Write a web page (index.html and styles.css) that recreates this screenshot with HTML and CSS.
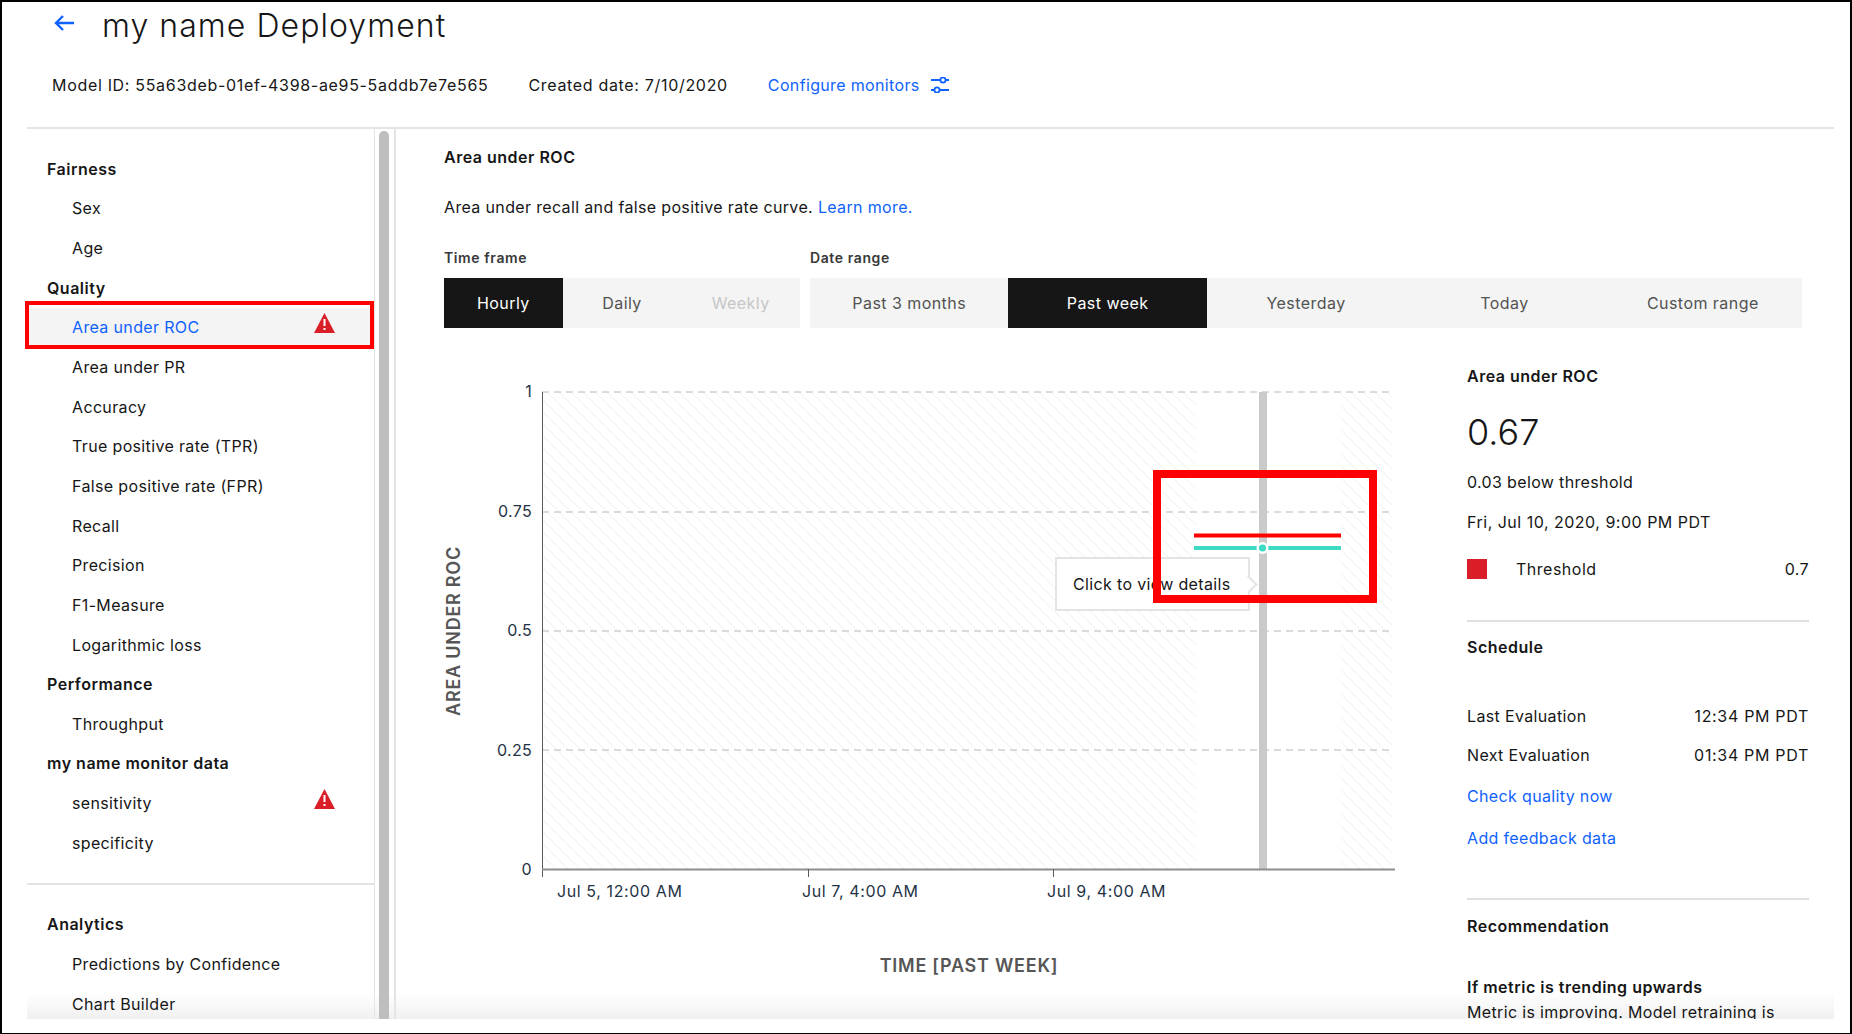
FILE: index.html
```html
<!DOCTYPE html>
<html lang="en">
<head>
    <meta charset="UTF-8">
    <title>my name Deployment</title>
    <link rel="stylesheet" href="styles.css">
</head>
<body>
<div class="frame">
    <header class="top">
        <div class="title-row">
            <svg class="back" viewBox="0 0 20 16" width="20" height="16"><path d="M9 1 L2 8 L9 15 M2 8 H20" fill="none" stroke="#0f62fe" stroke-width="2.4"/></svg>
            <h1>my name Deployment</h1>
        </div>
        <div class="meta">
            <span class="num">Model ID: 55a63deb-01ef-4398-ae95-5addb7e7e565</span>
            <span class="num">Created date: 7/10/2020</span>
            <a class="link">Configure monitors</a>
            <svg class="sliders" viewBox="0 0 18 16" width="18" height="16"><path d="M0 3 H9 M15 3 H18 M0 13 H3 M9 13 H18" stroke="#0f62fe" stroke-width="2" fill="none"/><circle cx="12" cy="3" r="2.6" fill="none" stroke="#0f62fe" stroke-width="1.8"/><circle cx="6" cy="13" r="2.6" fill="none" stroke="#0f62fe" stroke-width="1.8"/></svg>
        </div>
    </header>

    <div class="content">
        <div class="fade"></div>
        <aside class="side">
            <div class="nav-group">
                <div class="nav-head">Fairness</div>
                <div class="nav-item">Sex</div>
                <div class="nav-item">Age</div>
                <div class="nav-head">Quality</div>
                <div class="nav-item selected">Area under ROC
                    <svg class="warn" viewBox="0 0 21 20" width="21" height="20"><path d="M10.5 0 L21 20 H0 Z" fill="#da1e28"/><path d="M9.5 6 H11.5 V13 H9.5 Z M9.5 15 H11.5 V17 H9.5 Z" fill="#fff"/></svg>
                </div>
                <div class="nav-item">Area under PR</div>
                <div class="nav-item">Accuracy</div>
                <div class="nav-item">True positive rate (TPR)</div>
                <div class="nav-item">False positive rate (FPR)</div>
                <div class="nav-item">Recall</div>
                <div class="nav-item">Precision</div>
                <div class="nav-item">F1-Measure</div>
                <div class="nav-item">Logarithmic loss</div>
                <div class="nav-head">Performance</div>
                <div class="nav-item">Throughput</div>
                <div class="nav-head">my name monitor data</div>
                <div class="nav-item">sensitivity
                    <svg class="warn" viewBox="0 0 21 20" width="21" height="20"><path d="M10.5 0 L21 20 H0 Z" fill="#da1e28"/><path d="M9.5 6 H11.5 V13 H9.5 Z M9.5 15 H11.5 V17 H9.5 Z" fill="#fff"/></svg>
                </div>
                <div class="nav-item">specificity</div>
            </div>
            <div class="nav-group second">
                <div class="nav-head">Analytics</div>
                <div class="nav-item">Predictions by Confidence</div>
                <div class="nav-item">Chart Builder</div>
            </div>
        </aside>
        <div class="gutter"><div class="thumb"></div></div>

        <main class="main">
            <h2 class="strong">Area under ROC</h2>
            <p class="desc">Area under recall and false positive rate curve. <a class="link">Learn more.</a></p>

            <div class="filters">
                <div class="filter time">
                    <div class="filter-label">Time frame</div>
                    <div class="tabs">
                        <div class="tab on">Hourly</div>
                        <div class="tab">Daily</div>
                        <div class="tab off">Weekly</div>
                    </div>
                </div>
                <div class="filter range">
                    <div class="filter-label">Date range</div>
                    <div class="tabs">
                        <div class="tab">Past 3 months</div>
                        <div class="tab on">Past week</div>
                        <div class="tab">Yesterday</div>
                        <div class="tab">Today</div>
                        <div class="tab">Custom range</div>
                    </div>
                </div>
            </div>

            <div class="lower">
                <div class="chart">
                    <svg class="plot" viewBox="444 366 1023 620" width="1023" height="620">
                        <defs>
                            <pattern id="hatch" width="12" height="12" patternUnits="userSpaceOnUse">
                                <path d="M-2 -2 L14 14" stroke="#efefef" stroke-width="1"/>
                            </pattern>
                        </defs>
                        <rect x="542" y="391" width="654" height="477" fill="url(#hatch)"/>
                        <rect x="1340" y="391" width="52" height="477" fill="url(#hatch)"/>

                        <g class="grid">
                            <line x1="542" y1="391" x2="1392" y2="391"/>
                            <line x1="542" y1="511" x2="1392" y2="511"/>
                            <line x1="542" y1="630" x2="1392" y2="630"/>
                            <line x1="542" y1="749" x2="1392" y2="749"/>
                        </g>

                        <rect x="1259" y="391" width="8" height="477" fill="#cacaca"/>

                        <line x1="542.5" y1="391" x2="542.5" y2="876" stroke="#5a5a5a"/>
                        <line x1="542" y1="868.5" x2="1395" y2="868.5" stroke="#8d8d8d" stroke-width="2"/>
                        <line x1="808.5" y1="868" x2="808.5" y2="876" stroke="#5a5a5a"/>
                        <line x1="1053.5" y1="868" x2="1053.5" y2="876" stroke="#5a5a5a"/>

                        <g class="ytick">
                            <text x="532" y="396">1</text>
                            <text x="532" y="516">0.75</text>
                            <text x="532" y="635">0.5</text>
                            <text x="532" y="755">0.25</text>
                            <text x="532" y="874">0</text>
                        </g>
                        <g class="xtick">
                            <text x="557" y="896">Jul 5, 12:00 AM</text>
                            <text x="802" y="896">Jul 7, 4:00 AM</text>
                            <text x="1047" y="896">Jul 9, 4:00 AM</text>
                        </g>
                        <text class="axis-name" transform="translate(460 630) rotate(-90)">AREA UNDER ROC</text>
                        <text class="axis-name" x="969" y="971">TIME [PAST WEEK]</text>

                        <line x1="1194" y1="534.5" x2="1341" y2="534.5" stroke="#f00" stroke-width="4"/>
                        <line x1="1194" y1="547" x2="1341" y2="547" stroke="#3ddbc3" stroke-width="4"/>
                        <circle cx="1262.5" cy="547" r="6" fill="#fff"/>
                        <circle cx="1262.5" cy="547" r="3.6" fill="#3ddbc3"/>
                    </svg>
                    <div class="tip">Click to view details</div>
                    <div class="callout"></div>
                </div>

                <section class="panel">
                    <h3 class="strong">Area under ROC</h3>
                    <div class="score">0.67</div>
                    <div class="below">0.03 below threshold</div>
                    <div class="when">Fri, Jul 10, 2020, 9:00 PM PDT</div>
                    <div class="legend"><span class="swatch"></span><span class="legend-name">Threshold</span><span>0.7</span></div>
                    <hr class="rule">
                    <h3 class="strong sched">Schedule</h3>
                    <div class="pair first"><span>Last Evaluation</span><span class="num">12:34 PM PDT</span></div>
                    <div class="pair"><span>Next Evaluation</span><span class="num">01:34 PM PDT</span></div>
                    <a class="link action check">Check quality now</a>
                    <a class="link action add">Add feedback data</a>
                    <hr class="rule low">
                    <h3 class="strong rec">Recommendation</h3>
                    <h3 class="strong trend">If metric is trending upwards</h3>
                    <p class="advice">Metric is improving. Model retraining is</p>
                </section>
            </div>
        </main>
    </div>
</div>
</body>
</html>
```

FILE: styles.css
```css
* { box-sizing: border-box; }
html, body { margin: 0; height: 100%; overflow: hidden; background: white; }
body { font-family: Inter, "Noto Sans", sans-serif; font-size: 16px; line-height: 20px; letter-spacing: .35px; color: #161616; }
h1, h2, h3, p { margin: 0; font-size: inherit; font-weight: inherit; }
a { text-decoration: none; }
.link { color: #0f62fe; }
.strong { font-weight: 600; letter-spacing: .5px; }
.num { letter-spacing: .68px; }

.frame { height: 1034px; border: solid #000; border-width: 2px 2px 1px 2px; display: flex; flex-direction: column; }

.top { height: 127px; margin: 0 16px 0 25px; padding-left: 25px; border-bottom: 2px solid #e4e4e4; flex: none; }
.title-row { display: flex; align-items: center; height: 40px; margin-top: 4px; }
.back { margin: 0 28px 0 2px; position: relative; top: -3px; }
h1 { font-size: 32px; line-height: 40px; font-weight: 300; letter-spacing: 1.05px; }
.meta { display: flex; align-items: center; margin-top: 29px; }
.meta span { margin-right: 40px; }
.sliders { margin-left: 11px; }

.content { flex: none; height: 890px; margin: 0 16px 0 23px; display: flex; overflow: hidden; position: relative; }

.side { width: 350px; flex: none; border-right: 1px solid #e4e4e4; padding: 20px 0 0 2px; position: relative; }
.nav-head, .nav-item { height: 39.65px; display: flex; align-items: center; }
.nav-head { padding-left: 20px; font-weight: 600; letter-spacing: .5px; }
.nav-item { padding: 0 39px 0 45px; justify-content: space-between; position: relative; }
.nav-item.selected { color: #0f62fe; background: #f4f4f4; }
.nav-item.selected::after { content: ""; position: absolute; left: -2px; right: 0; top: -7px; bottom: -2px; border: 4.5px solid #f00; }
.warn { position: relative; top: -4px; }
.nav-group { padding-bottom: 20px; }
.nav-group.second { border-top: 2px solid #e4e4e4; padding-top: 20px; }

.gutter { width: 19px; flex: none; padding: 2px 4px 0; position: relative; }
.thumb { width: 10px; height: 100%; background: #bebebe; border-radius: 5px 5px 0 0; }

.main { flex: 1; border-left: 2px solid #e4e4e4; padding: 18px 0 0 48px; min-width: 0; position: relative; }
.desc { margin-top: 30px; }

.filters { display: flex; gap: 10px; margin-top: 32px; width: 1358px; }
.filter.time { width: 356px; }
.filter.range { flex: 1; }
.filter-label { font-size: 14px; font-weight: 600; line-height: 18px; letter-spacing: .6px; color: #393939; }
.tabs { display: flex; margin-top: 11px; background: #f4f4f4; height: 50px; }
.tab { flex: 1; display: flex; align-items: center; justify-content: center; color: #525252; letter-spacing: .45px; }
.tab.on { background: #161616; color: white; }
.tab.off { color: #c6c6c6; }

.lower { display: flex; margin-top: 37px; }
.chart { width: 1023px; flex: none; position: relative; }
.plot { display: block; margin-top: 2px; overflow: visible; }
.grid line { stroke: #d0d0d0; stroke-width: 1.5; stroke-dasharray: 7 5; }
.ytick text { text-anchor: end; fill: #1f3347; font-size: 16px; letter-spacing: .3px; }
.xtick text { fill: #1f3347; font-size: 16px; letter-spacing: .6px; }
.axis-name { text-anchor: middle; fill: #565656; font-size: 18px; font-weight: 600; letter-spacing: .75px; }

.tip { position: absolute; left: 611px; top: 192px; width: 195px; height: 54px; border: 2px solid #e4e4e4; background: white; padding-left: 16px; display: flex; align-items: center; }
.tip::after { content: ""; position: absolute; right: -7px; top: 19px; width: 11px; height: 11px; background: white; border: solid #e4e4e4; border-width: 2px 2px 0 0; transform: rotate(45deg); }
.callout { position: absolute; left: 709px; top: 105px; width: 224px; height: 133px; border: 8px solid #f00; }

.panel { width: 342px; flex: none; padding-top: 1px; }
.score { font-size: 36px; line-height: 44px; margin-top: 24px; font-weight: 300; letter-spacing: 0; }
.below { margin-top: 18px; }
.when { margin-top: 20px; letter-spacing: .5px; }
.legend { display: flex; align-items: center; margin-top: 27px; }
.swatch { width: 20px; height: 20px; background: #da1e28; margin-right: 29px; }
.legend-name { flex: 1; letter-spacing: .5px; }
.rule { border: 0; height: 2px; background: #e0e0e0; margin: 41px 0 0; }
.rule.low { margin-top: 50px; }
.sched { margin-top: 15px; }
.pair { display: flex; justify-content: space-between; margin-top: 19px; }
.pair.first { margin-top: 49px; }
.action { display: block; }
.check { margin-top: 21px; }
.add { margin-top: 22px; }
.rec { margin-top: 16px; }
.trend { margin-top: 41px; }
.advice { margin-top: 5px; }

.fade { position: absolute; left: 2px; right: 0; bottom: 0; height: 26px; background: linear-gradient(rgba(240,240,240,0), rgba(240,240,240,1)); }
```
